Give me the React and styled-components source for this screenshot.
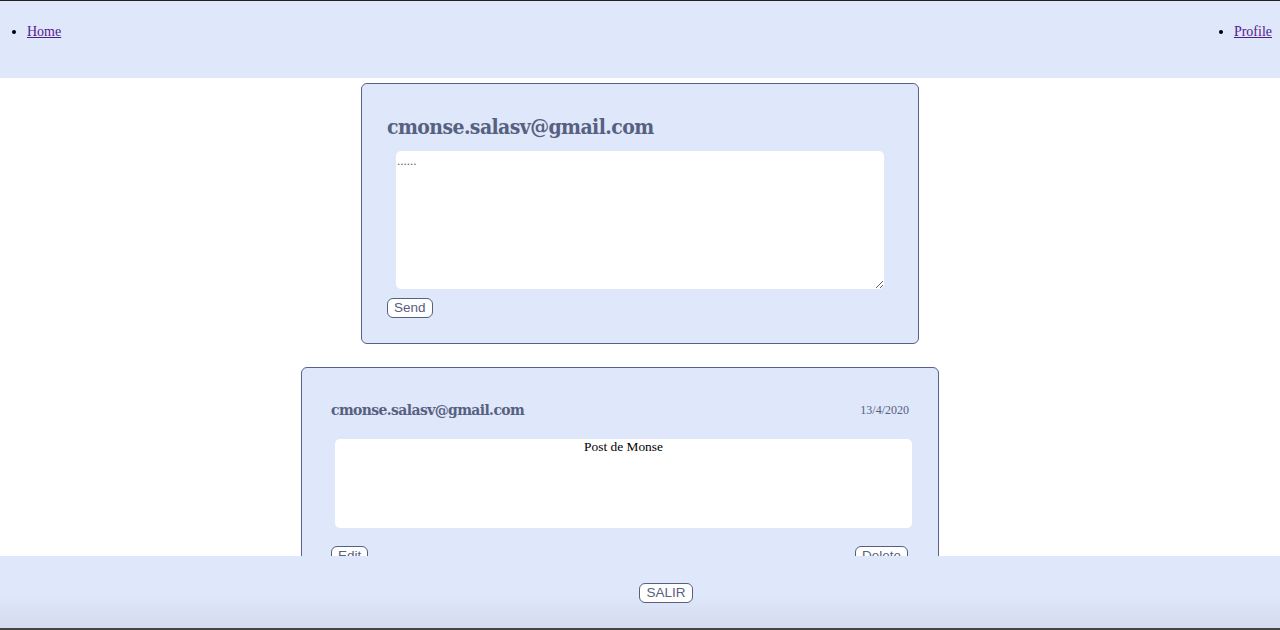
import React from 'react';
import styled, { createGlobalStyle } from 'styled-components';

const GlobalStyle = createGlobalStyle`
    html, body {
        margin: 0;
        padding: 0;
        background: #ffffff;
        font-family: "Liberation Serif", "Times New Roman", serif;
        overflow: hidden;
    }
`

const Page = styled.div`
    min-height: 630px;
    border-top: 1px solid #222;
    box-sizing: border-box;
`

const Header = styled.nav`
    background-color: #dfe7fa;
    height: 77px;
    display: flex;
    justify-content: space-between;
    align-items: flex-start;
`

const NavList = styled.ul`
    margin: 0;
    padding: 23px 8px 0 27px;
    font-size: 14px;
    li::marker { color: #000; }
`

const NavLink = styled.a`
    color: #551a8b;
    text-decoration: underline;
`

const Main = styled.main`
    display: flex;
    flex-direction: column;
    align-items: center;
    padding-top: 5px;
    gap: 23px;
`

const Card = styled.section`
    box-sizing: border-box;
    width: ${p => p.$w}px;
    margin-right: ${p => p.$shift || 0}px;
    background-color: #dfe7fa;
    border: 1px solid #56608a;
    border-radius: 6px;
    padding: ${p => p.$pad};
`

const Title = styled.h2`
    margin: 0;
    color: #56607f;
    font-family: "DejaVu Serif Condensed", "DejaVu Serif", Georgia, serif;
    font-stretch: condensed;
    font-weight: bold;
    font-size: ${p => p.$size}px;
    letter-spacing: -0.6px;
    line-height: 1.2;
`

const PostHead = styled.div`
    display: flex;
    justify-content: space-between;
    align-items: center;
    padding-right: 3px;
`

const DateText = styled.span`
    color: #56607f;
    font-size: 12px;
`

const TextArea = styled.textarea`
    display: block;
    box-sizing: border-box;
    width: 488px;
    height: 138px;
    margin: 12px 0 9px 9px;
    border: none;
    border-radius: 5px;
    background: #fff;
    padding: 2px 1px;
    font-family: "Liberation Serif", serif;
    font-size: 13px;
    &::placeholder { color: #666; }
`

const PostBody = styled.div`
    box-sizing: border-box;
    height: 89px;
    margin: 19px 0 18px 4px;
    background: #fff;
    border-radius: 5px;
    text-align: center;
    font-size: 13.4px;
    color: #000;
`

const Actions = styled.div`
    display: flex;
    justify-content: space-between;
    padding-right: 4px;
`

const Button = styled.button`
    background: #fff;
    border: 1px solid #56607f;
    border-radius: 6px;
    color: #56607f;
    font-family: "Liberation Sans", Arial, sans-serif;
    font-size: 13.5px;
    padding: 1px 6px;
    line-height: 16px;
`

const Footer = styled.footer`
    position: fixed;
    left: 0;
    right: 0;
    bottom: 0;
    height: 74px;
    background: linear-gradient(#dfe7fa 55%, #d4daf0 100%);
    display: flex;
    justify-content: center;
    align-items: flex-start;
    padding: 27px 0 0 52px;
    box-sizing: border-box;
    border-bottom: 2px solid #444;
`

export default function App() {
    return (
        <Page>
            <GlobalStyle />
            <Header>
                <NavList><li><NavLink href="#">Home</NavLink></li></NavList>
                <NavList><li><NavLink href="#">Profile</NavLink></li></NavList>
            </Header>
            <Main>
                <Card $w={558} $pad="30px 25px 25px">
                    <Title $size={21}>cmonse.salasv@gmail.com</Title>
                    <TextArea placeholder="......" />
                    <Button>Send</Button>
                </Card>
                <Card $w={638} $shift={40} $pad="33px 26px 30px 29px">
                    <PostHead>
                        <Title $size={15.5}>cmonse.salasv@gmail.com</Title>
                        <DateText>13/4/2020</DateText>
                    </PostHead>
                    <PostBody>Post de Monse</PostBody>
                    <Actions>
                        <Button>Edit</Button>
                        <Button>Delete</Button>
                    </Actions>
                </Card>
            </Main>
            <Footer>
                <Button>SALIR</Button>
            </Footer>
        </Page>
    );
}
